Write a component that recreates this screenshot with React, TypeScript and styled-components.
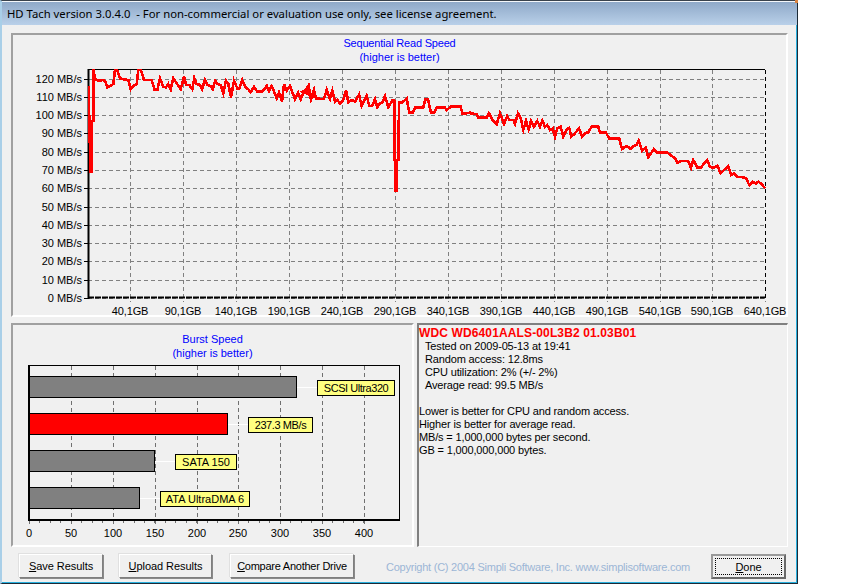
import React from "react";
import styled, { createGlobalStyle } from "styled-components";

const GlobalStyle = createGlobalStyle`
  html, body {
    margin: 0;
    padding: 0;
    background: #ffffff;
  }
  body {
    font-family: "Liberation Sans", Arial, sans-serif;
    font-size: 11px;
  }
`;

const Window = styled.div`
  box-sizing: border-box;
  width: 798px;
  height: 584px;
  display: flex;
  flex-direction: column;
  position: relative;
  background: #f0f0f0;
  border-style: solid;
  border-width: 1px 1px 1px 2px;
  border-color: #39424c #1c2a36 #1c2a36 #a9cfe8;
  box-shadow: inset -1px -1px 0 #29b0de;
  &::after {
    content: "";
    position: absolute;
    top: -1px;
    right: -1px;
    width: 3px;
    height: 3px;
    background: #d9823f;
  }
`;

const TitleBar = styled.div`
  height: 24px;
  flex: none;
  display: flex;
  align-items: center;
  padding-left: 5px;
  background: linear-gradient(#8fa9c8, #b9d0e9);
  border-top: 1px solid #f4f7fa;
  box-sizing: border-box;
  font-family: "Noto Sans", sans-serif;
  font-size: 11.3px;
  color: #000000;
  white-space: pre;
`;

const Body = styled.div`
  flex: 1;
  display: flex;
  flex-direction: column;
  padding: 8px 9px 0 9px;
`;

const Panel = styled.div<{ $w?: number; $h: number }>`
  box-sizing: border-box;
  width: ${(p) => (p.$w ? `${p.$w}px` : "auto")};
  height: ${(p) => p.$h}px;
  flex: none;
  position: relative;
  border: 2px solid;
  border-color: #a0a0a0 #ffffff #ffffff #a0a0a0;
`;

const PanelRow = styled.div`
  display: flex;
  gap: 3px;
  margin-top: 6px;
`;

const ChartTitle = styled.div<{ $top: number }>`
  color: #0000ff;
  text-align: center;
  line-height: 14px;
  font-size: 11px;
  padding-top: ${(p) => p.$top}px;
`;

const TightLine = styled.span`
  letter-spacing: -0.2px;
`;

const Plot = styled.svg`
  display: block;
  overflow: visible;
  text {
    font-family: "Liberation Sans", Arial, sans-serif;
    font-size: 11px;
    fill: #000000;
  }
`;

const InfoPanel = styled.div`
  box-sizing: border-box;
  flex: 1;
  height: 224px;
  padding: 2px 0 0 0;
  border-style: solid;
  border-width: 2px 1px 1px 2px;
  border-color: #808080 #ffffff #ffffff #808080;
  font-size: 11px;
  line-height: 13px;
  letter-spacing: -0.15px;
  color: #000000;
`;

const DriveName = styled.div`
  color: #ff0000;
  font-weight: bold;
  font-size: 12px;
  letter-spacing: 0.13px;
`;

const InfoLine = styled.div<{ $indent?: boolean }>`
  padding-left: ${(p) => (p.$indent ? 6 : 0)}px;
  min-height: 13px;
`;

const Footer = styled.div`
  flex: 1;
  display: flex;
  align-items: flex-start;
  padding-top: 7px;
`;

const Button = styled.button<{ $w: number; $ml: number; $spacing?: number }>`
  box-sizing: border-box;
  width: ${(p) => p.$w}px;
  height: 24px;
  flex: none;
  margin-left: ${(p) => p.$ml}px;
  padding: 0;
  background: #f0f0f0;
  border: 1px solid;
  border-color: #ffffff #7f7f7f #7f7f7f #ffffff;
  box-shadow: -1px -1px 0 #e0e0e0, 1px 1px 0 #8a8a8a;
  font-family: "Liberation Sans", Arial, sans-serif;
  font-size: 11px;
  letter-spacing: ${(p) => p.$spacing ?? -0.05}px;
  color: #000000;
  white-space: nowrap;
`;

const DoneButton = styled(Button)`
  height: 25px;
  border: 2px solid #696969;
  border-top-color: #9a9a9a;
  border-left-color: #9a9a9a;
  box-shadow: none;
  position: relative;
  &::after {
    content: "";
    position: absolute;
    inset: 2px;
    border: 1px dotted #000000;
  }
`;

const Copyright = styled.div`
  margin-left: 32px;
  margin-top: 7px;
  width: 325px;
  flex: none;
  font-size: 11px;
  letter-spacing: -0.24px;
  color: #9cb6d6;
  white-space: nowrap;
`;

const Tag = styled.div<{ $x: number; $y: number; $w: number; $spacing: number }>`
  position: absolute;
  left: ${(p) => p.$x - 13}px;
  top: ${(p) => p.$y - 325}px;
  width: ${(p) => p.$w}px;
  height: 16px;
  box-sizing: border-box;
  background: #ffff80;
  border: 1px solid #000000;
  text-align: center;
  line-height: 14px;
  font-size: 11px;
  letter-spacing: ${(p) => p.$spacing}px;
  color: #000000;
  white-space: nowrap;
`;

const PLOT = { left: 75, right: 752, top: 35, bottom: 263 };

const speedLabels = [120, 110, 100, 90, 80, 70, 60, 50, 40, 30, 20, 10, 0];
const gbLabels = [40, 90, 140, 190, 240, 290, 340, 390, 440, 490, 540, 590, 640];

const rowY = (i: number) => Math.round(43.5 + i * 18.29);
const colX = (i: number) => Math.round(117 + i * 52.95);

// traced from the run, in 3x crop pixels
const zoomA = [40,30,47,60,60,62,70,60,76,65,82,82,95,75,100,72,105,30,112,30,120,55,130,58,145,60,152,88,160,78,170,72,175,30,183,30,192,60,215,60,224,90,232,90,240,55,250,80,258,82,265,72,272,88,280,55,290,70,302,88,312,50,318,74,328,75,337,88,343,55,350,72,360,75,366,88,375,60,382,75,392,78,398,88,406,62,412,72,422,75,430,100,438,62,445,72,453,112,462,62,472,85,478,85,487,60,497,82,505,88,512,97,522,80,532,95,545,95,552,90,560,77,567,93,575,78,590,115,597,98,606,125,612,72,620,92,630,78,645,118,654,98,662,118,672,95,680,92,686,78,693,117,702,90,708,117,720,117];
const zoomB = [8,95,18,90,25,78,33,118,42,90,48,117,72,117,80,90,90,117,97,93,105,125,112,120,120,130,130,120,138,90,145,127,155,120,165,125,177,104,185,138,200,108,208,138,216,138,225,118,232,142,240,130,247,128,255,108,265,142,278,120,284,122,284,300,287,300,287,392,291,392,291,300,296,300,296,215,297,128,305,128,320,116,328,158,338,158,345,143,370,143,376,118,384,118,393,158,402,158,410,143,435,143,440,150,452,140,482,140,487,160,498,160,510,158,515,161,530,162,535,173,560,173,567,160,578,180,590,193,600,160,612,192,622,168,628,180,640,180,645,192,654,160,662,175,670,210,678,183,686,208,693,183,702,200,712,183,720,200];
const zoomC = [30,80,37,62,45,80,52,75,60,90,68,85,75,110,82,85,92,80,100,110,110,88,118,84,124,110,135,100,147,85,156,110,165,100,175,97,185,80,205,80,210,98,228,98,238,116,268,116,276,147,290,138,302,147,310,138,320,135,326,122,336,152,347,143,355,172,372,147,380,157,412,158,435,175,442,188,455,183,474,183,483,203,490,180,502,203,512,203,531,180,540,200,550,203,562,197,572,220,595,198,604,225,612,220,622,230,640,232,648,235,658,255,668,245,678,250,685,245,695,252,705,265];

const trace = (data: number[], ox: number, oy: number) => {
  const out: string[] = [];
  for (let i = 0; i < data.length; i += 2) {
    out.push(`${(ox + data[i] / 3 - 13).toFixed(1)},${(oy + data[i + 1] / 3 - 35).toFixed(1)}`);
  }
  return out;
};

const startSpike = [89,86,89,143,90,115,90.5,172,92,172,92,121,93.5,121,93.5,70].flatMap((v, i) =>
  i % 2 === 0 ? [(v - 80) * 3] : [(v - 60) * 3]
);

const curve = [
  ...trace(startSpike, 80, 60),
  ...trace(zoomA, 80, 60),
  ...trace(zoomB, 300, 60),
  ...trace(zoomC, 530, 100),
].join(" ");

const SpeedChart = () => (
  <Plot width={773} height={251} viewBox="0 29 773 251">
    {speedLabels.map((v, i) => (
      <g key={v}>
        <line x1={71} x2={PLOT.left} y1={rowY(i) + 0.5} y2={rowY(i) + 0.5} stroke="#000" />
        <line
          x1={PLOT.left}
          x2={PLOT.right}
          y1={rowY(i) + 0.5}
          y2={rowY(i) + 0.5}
          stroke="#808080"
          strokeDasharray="4 3"
        />
        <text x={69} y={rowY(i) + 4} textAnchor="end">
          {v} MB/s
        </text>
      </g>
    ))}
    {gbLabels.map((v, i) => (
      <g key={v}>
        <line
          x1={colX(i) + 0.5}
          x2={colX(i) + 0.5}
          y1={PLOT.top}
          y2={PLOT.bottom + 4}
          stroke="#808080"
          strokeDasharray="4 3"
        />
        <text x={colX(i)} y={280} textAnchor="middle" letterSpacing="-0.1">
          {v},1GB
        </text>
      </g>
    ))}
    <line x1={PLOT.left} x2={PLOT.right} y1={PLOT.top - 0.5} y2={PLOT.top - 0.5} stroke="#000" />
    <line x1={PLOT.left + 0.5} x2={PLOT.left + 0.5} y1={PLOT.top - 1} y2={PLOT.bottom + 1} stroke="#000" strokeWidth={2} />
    <line x1={PLOT.left} x2={PLOT.right} y1={PLOT.bottom - 0.5} y2={PLOT.bottom - 0.5} stroke="#000" strokeWidth={2} strokeDasharray="6 1" />
    <line x1={PLOT.right + 0.5} x2={PLOT.right + 0.5} y1={PLOT.top} y2={PLOT.bottom} stroke="#000" strokeDasharray="4 3" />
    <polyline points={curve} fill="none" stroke="#ff0000" strokeWidth={2.6} shapeRendering="crispEdges" />
  </Plot>
);

const bars = [
  { name: "SCSI Ultra320", end: 296, top: 377, color: "#808080", lx: 317, lw: 78, spacing: -0.45 },
  { name: "237.3 MB/s", end: 227, top: 414, color: "#ff0000", lx: 248, lw: 65, spacing: -0.4 },
  { name: "SATA 150", end: 154, top: 451, color: "#808080", lx: 175, lw: 62, spacing: 0 },
  { name: "ATA UltraDMA 6", end: 139, top: 488, color: "#808080", lx: 160, lw: 90, spacing: 0 },
];
const burstTicks = [0, 50, 100, 150, 200, 250, 300, 350, 400];
const burstX = [29, 71, 113, 155, 197, 238, 280, 322, 364];
const minorX = Array.from({ length: 33 }, (_, i) => Math.round(29 + i * 10.45));
const OX = 13;
const OY = 325;

const BurstChart = () => (
  <Plot width={399} height={185} viewBox="0 35 399 185">
    {burstTicks.map((v, i) => (
      <g key={v}>
        <line
          x1={burstX[i] - OX + 0.5}
          x2={burstX[i] - OX + 0.5}
          y1={366 - OY}
          y2={524 - OY}
          stroke="#707070"
          strokeDasharray="4 3"
        />
        <text x={burstX[i] - OX} y={537 - OY} textAnchor="middle">
          {v}
        </text>
      </g>
    ))}
    {minorX.map((x) => (
      <line key={x} x1={x - OX + 0.5} x2={x - OX + 0.5} y1={521 - OY} y2={523 - OY} stroke="#707070" />
    ))}
    <rect x={29.5 - OX} y={365.5 - OY} width={370} height={154} fill="none" stroke="#000" />
    <line x1={29 - OX} x2={29 - OX} y1={365 - OY} y2={521 - OY} stroke="#000" strokeWidth={2} />
    <line x1={29 - OX} x2={400 - OX} y1={520 - OY} y2={520 - OY} stroke="#000" strokeWidth={2} />
    {bars.map((b) => (
      <g key={b.name}>
        <line x1={b.end - OX} x2={b.lx - OX} y1={b.top + 10.5 - OY} y2={b.top + 10.5 - OY} stroke="#fff" />
        <rect x={29.5 - OX} y={b.top - 0.5 - OY} width={b.end - 29} height={21} fill={b.color} stroke="#000" />
      </g>
    ))}
  </Plot>
);

const info = [
  { text: "Tested on 2009-05-13 at 19:41", indent: true },
  { text: "Random access: 12.8ms", indent: true },
  { text: "CPU utilization: 2% (+/- 2%)", indent: true },
  { text: "Average read: 99.5 MB/s", indent: true },
  { text: "" },
  { text: "Lower is better for CPU and random access." },
  { text: "Higher is better for average read." },
  { text: "MB/s = 1,000,000 bytes per second." },
  { text: "GB = 1,000,000,000 bytes." },
];

export default function App() {
  return (
    <>
      <GlobalStyle />
      <Window>
        <TitleBar>HD Tach version 3.0.4.0  - For non-commercial or evaluation use only, see license agreement.</TitleBar>
        <Body>
          <Panel $h={284}>
            <ChartTitle $top={1}>
              <TightLine>Sequential Read Speed</TightLine>
              <br />
              (higher is better)
            </ChartTitle>
            <SpeedChart />
          </Panel>
          <PanelRow>
            <Panel $w={403} $h={224}>
              <ChartTitle $top={7}>
                Burst Speed
                <br />
                (higher is better)
              </ChartTitle>
              <BurstChart />
              {bars.map((b) => (
                <Tag key={b.name} $x={b.lx} $y={b.top + 3} $w={b.lw} $spacing={b.spacing}>
                  {b.name}
                </Tag>
              ))}
            </Panel>
            <InfoPanel>
              <DriveName>WDC WD6401AALS-00L3B2 01.03B01</DriveName>
              {info.map((l, i) => (
                <InfoLine key={i} $indent={l.indent}>
                  {l.text}
                </InfoLine>
              ))}
            </InfoPanel>
          </PanelRow>
          <Footer>
            <Button $w={84} $ml={8}>
              <u>S</u>ave Results
            </Button>
            <Button $w={93} $ml={16}>
              <u>U</u>pload Results
            </Button>
            <Button $w={124} $ml={18} $spacing={-0.25}>
              <u>C</u>ompare Another Drive
            </Button>
            <Copyright>Copyright (C) 2004 Simpli Software, Inc. www.simplisoftware.com</Copyright>
            <DoneButton $w={75} $ml={0}>
              <u>D</u>one
            </DoneButton>
          </Footer>
        </Body>
      </Window>
    </>
  );
}
